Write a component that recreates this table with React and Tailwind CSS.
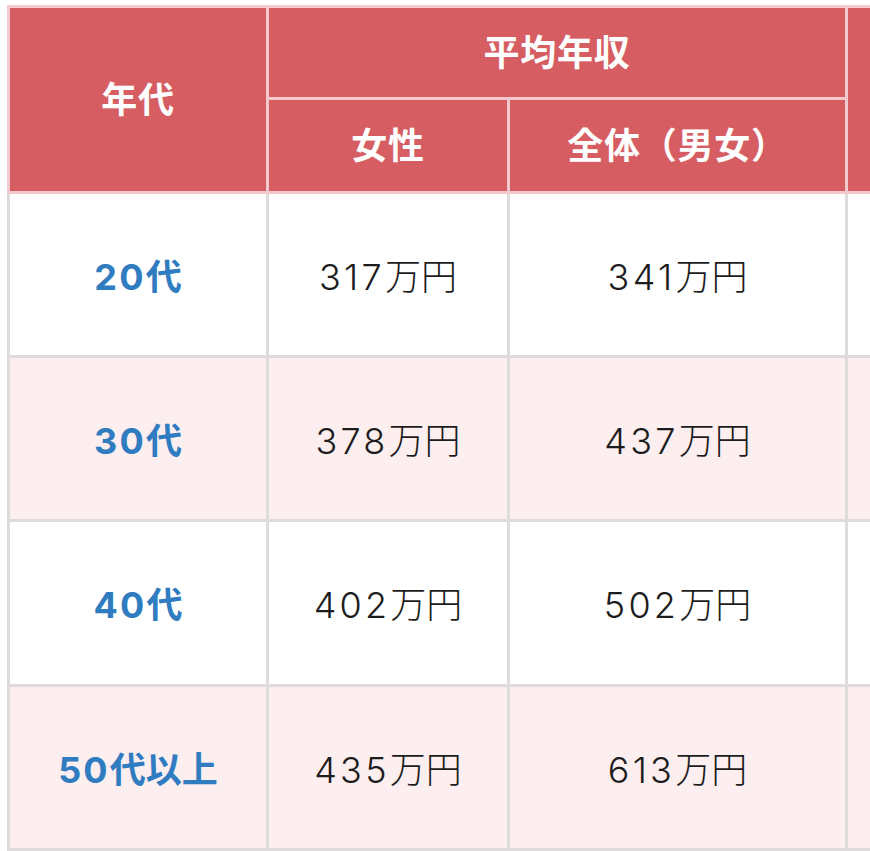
const rows = [
  { age: '20', suffix: '代', female: '317', total: '341', striped: false },
  { age: '30', suffix: '代', female: '378', total: '437', striped: true },
  { age: '40', suffix: '代', female: '402', total: '502', striped: false },
  { age: '50', suffix: '代以上', female: '435', total: '613', striped: true },
];

const head = 'flex items-center justify-center bg-[#d65e63] text-white font-bold tracking-[0.02em] border-[#f3c9cd] border-r-[3px] border-b-[3px]';
const cell = 'flex items-center justify-center pt-[4px] border-[#dedbdd] border-r-[3px] border-b-[3px]';

const Yen = ({ value }) => (
  <span>
    <span className="tracking-[0.09em]">{value}</span>万円
  </span>
);

export default function App() {
  return (
    <div className="w-[870px] h-[851px] overflow-hidden bg-white pl-[7px] pt-[5px] font-['Inter','Noto_Sans_CJK_JP',sans-serif] text-[36px] leading-none">
      <div className="grid w-max grid-cols-[262px_241px_338px_300px] grid-rows-[95px_94px_164px_164px_165px_164px]">
        <div className={`${head} row-span-2 border-l-[3px] border-t-[3px]`}>年代</div>
        <div className={`${head} col-span-2 border-t-[3px]`}>平均年収</div>
        <div className={`${head} row-span-2 border-t-[3px]`} />
        <div className={head}>女性</div>
        <div className={head}>全体（男女）</div>

        {rows.map((row) => {
          const bg = row.striped ? 'bg-[#fdeef0]' : 'bg-white';
          return [
            <div key={row.age + 'a'} className={`${cell} ${bg} border-l-[3px] text-[#2f7cc0] font-bold`}>
              <span>
                <span className="tracking-[0.06em]">{row.age}</span>
                {row.suffix}
              </span>
            </div>,
            <div key={row.age + 'f'} className={`${cell} ${bg} text-[#1c1c1c] font-light`}>
              <Yen value={row.female} />
            </div>,
            <div key={row.age + 't'} className={`${cell} ${bg} text-[#1c1c1c] font-light`}>
              <Yen value={row.total} />
            </div>,
            <div key={row.age + 'm'} className={`${cell} ${bg}`} />,
          ];
        })}
      </div>
    </div>
  );
}
